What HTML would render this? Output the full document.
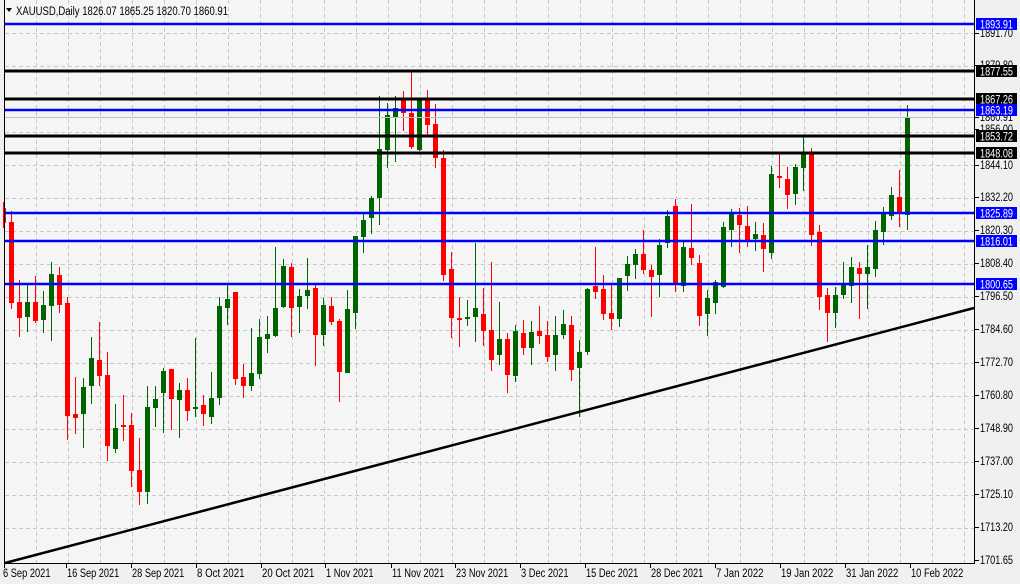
<!DOCTYPE html>
<html><head><meta charset="utf-8"><style>
html,body{margin:0;padding:0;background:#f0f0f0;}
body{width:1020px;height:584px;overflow:hidden;position:relative;font-family:"Liberation Sans",sans-serif;}
svg{position:absolute;left:0;top:0;}
text{font-family:"Liberation Sans",sans-serif;font-size:11.5px;}
</style></head><body>
<svg id="s" width="1020" height="584" xmlns="http://www.w3.org/2000/svg">
<rect x="4" y="0" width="970" height="563" fill="#f5f5f5"/>
<g id="grid" stroke="#c8c8c8" stroke-width="1" stroke-dasharray="4,3"></g>
<g id="candles"></g>
<g id="hl"></g>
<line x1="5" y1="563" x2="974" y2="308" stroke="#000" stroke-width="2.5"/>
<line x1="4.5" y1="0" x2="4.5" y2="563" stroke="#000"/>
<line x1="974.5" y1="0" x2="974.5" y2="563" stroke="#000"/>
<line x1="4" y1="563.5" x2="975" y2="563.5" stroke="#000"/>
<g id="axis" fill="#000"></g>
<g id="dates" fill="#000"></g>
<polygon points="6,8 12,8 9,12" fill="#000"/>
<text x="16" y="15" font-size="12" textLength="212" lengthAdjust="spacingAndGlyphs">XAUUSD,Daily  1826.07 1865.25 1820.70 1860.91</text>
</svg>
<script>
var NS="http://www.w3.org/2000/svg";
function el(p,t,a,txt){var e=document.createElementNS(NS,t);for(var k in a)e.setAttribute(k,a[k]);if(txt!==undefined)e.textContent=txt;document.getElementById(p).appendChild(e);return e;}
for(var y=33;y<560;y+=33){el("grid","line",{x1:5,y1:y+0.5,x2:974,y2:y+0.5});}
for(var x=36;x<974;x+=32){el("grid","line",{x1:x+0.5,y1:0,x2:x+0.5,y2:563});}
var d=[
[-1,'r',202,208,223,228],
[0,'r',211,222,303,309],[1,'r',280,302,318,337],[2,'g',284,302,317,332],[3,'r',276,302,321,323],[4,'g',291,305,320,333],
[5,'g',262,274,306,341],[6,'r',267,275,305,313],[7,'r',297,303,416,440],[8,'r',377,414,418,434],[9,'g',378,387,414,448],
[10,'g',337,358,386,404],[11,'r',322,360,376,386],[12,'r',352,375,446,461],[13,'g',404,428,449,453],[14,'r',395,425,427,441],
[15,'r',413,425,471,487],[16,'r',438,470,492,505],[17,'g',386,407,492,504],[18,'g',386,399,408,427],[19,'g',368,371,393,433],
[20,'r',369,369,399,430],[21,'g',383,390,400,438],[22,'r',378,390,411,421],[23,'g',338,407,409,417],[24,'r',395,405,414,426],
[25,'g',372,398,417,424],[26,'g',297,306,398,405],[27,'g',285,299,308,325],[28,'r',292,292,379,385],[29,'r',364,377,386,398],
[30,'g',328,373,386,391],[31,'g',319,337,374,379],[32,'g',316,334,339,353],[33,'g',247,308,336,337],[34,'g',259,266,307,308],
[35,'r',263,267,308,337],[36,'g',289,296,307,333],[37,'g',258,290,296,309],[38,'r',283,288,335,366],[39,'g',298,305,335,346],
[40,'r',297,306,322,325],[41,'r',319,321,372,402],[42,'g',290,309,373,373],[43,'g',236,236,313,329],[44,'g',214,220,237,253],
[45,'g',196,198,218,234],[46,'g',96,149,198,225],[47,'g',103,115,150,168],[48,'g',96,108,117,162],[49,'r',91,98,113,131],
[50,'r',72,113,147,149],[51,'g',98,100,150,151],[52,'r',90,99,125,135],[53,'r',104,124,158,168],[54,'r',150,158,275,281],
[55,'r',252,269,318,338],[56,'r',297,318,320,347],[57,'g',300,317,319,326],[58,'g',243,308,317,342],[59,'r',288,314,331,346],
[60,'r',262,330,360,371],[61,'g',302,339,355,365],[62,'r',333,339,375,393],[63,'g',325,331,376,382],[64,'r',320,333,348,355],
[65,'g',321,332,348,365],[66,'r',306,331,336,344],[67,'r',321,335,357,362],[68,'g',316,335,355,371],[69,'g',310,324,335,339],
[70,'r',316,325,370,381],[71,'g',340,352,368,417],[72,'g',288,289,352,355],[73,'r',247,286,292,299],[74,'r',275,289,314,320],
[75,'r',285,313,319,330],[76,'g',278,278,319,327],[77,'g',256,264,276,291],[78,'g',249,254,265,279],[79,'r',230,254,270,274],
[80,'r',265,270,277,317],[81,'g',239,245,275,297],[82,'g',210,216,243,248],[83,'r',199,206,283,292],[84,'g',240,247,286,292],
[85,'r',204,248,258,265],[86,'r',255,263,316,326],[87,'g',290,298,314,336],[88,'g',280,282,303,314],[89,'g',222,227,287,288],
[90,'g',209,214,230,247],[91,'r',208,215,225,253],[92,'r',206,226,240,247],[93,'g',222,234,239,251],[94,'r',223,235,249,272],
[95,'g',166,174,253,259],[96,'r',153,176,178,188],[97,'r',167,179,195,209],[98,'g',164,167,194,205],[99,'g',137,154,168,191],
[100,'r',148,154,235,246],[101,'r',225,232,297,310],[102,'r',288,295,313,342],[103,'g',287,295,313,328],[104,'g',262,284,295,299],
[105,'g',257,267,286,303],[106,'r',262,268,274,319],[107,'g',245,267,274,309],[108,'g',221,230,269,277],[109,'g',207,214,232,245],
[110,'g',187,195,216,220],[111,'r',170,197,214,227],[112,'g',105,117,215,230]
];
d.forEach(function(c){var cx=11+8*c[0];var col=c[1]=='g'?'#006400':'#ff0000';
var x0=Math.max(5,cx-2);
el("candles","rect",{x:cx,y:c[2],width:1,height:Math.max(1,c[5]-c[2]),fill:col});
el("candles","rect",{x:x0,y:c[3],width:cx+3-x0,height:Math.max(2,c[4]-c[3]),fill:col});});
var hl=[[24,'#0000ff',2.5,'1893.91'],[71,'#000',3,'1877.55'],[99,'#000',3,'1867.26'],[110,'#0000ff',2.5,'1863.19'],[136,'#000',3,'1853.72'],[153,'#000',3,'1848.08'],[213,'#0000ff',2.5,'1825.89'],[241,'#0000ff',2.5,'1816.01'],[284,'#0000ff',2.5,'1800.65']];
el("hl","line",{x1:5,y1:117.5,x2:974,y2:117.5,stroke:"#c0c0c0","stroke-width":1});
var al=[[33,'1891.70'],[65,'1879.80'],[117,'1860.91'],[129,'1856.00'],[165,'1844.10'],[197,'1832.20'],[230,'1820.30'],[263,'1808.40'],[296,'1796.50'],[329,'1784.60'],[362,'1772.70'],[395,'1760.80'],[428,'1748.90'],[461,'1737.00'],[494,'1725.10'],[527,'1713.20'],[560,'1701.65']];
al.forEach(function(a){el("axis","rect",{x:975,y:a[0],width:4,height:1,fill:"#000"});el("axis","text",{x:980,y:a[0]+4,"font-size":12.5,textLength:33,lengthAdjust:"spacingAndGlyphs"},a[1]);});
hl.forEach(function(h){el("hl","line",{x1:5,y1:h[0],x2:974,y2:h[0],stroke:h[1],"stroke-width":h[2]});
el("axis","rect",{x:976,y:h[0]-6,width:41,height:12,fill:h[1]});
el("axis","text",{x:980,y:h[0]+4.5,fill:"#fff","font-size":12.5,textLength:33,lengthAdjust:"spacingAndGlyphs"},h[3]);});
var dl=[[2,'6 Sep 2021'],[66,'16 Sep 2021'],[131,'28 Sep 2021'],[196,'8 Oct 2021'],[261,'20 Oct 2021'],[325,'1 Nov 2021'],[391,'11 Nov 2021'],[455,'23 Nov 2021'],[520,'3 Dec 2021'],[585,'15 Dec 2021'],[650,'28 Dec 2021'],[715,'7 Jan 2022'],[780,'19 Jan 2022'],[845,'31 Jan 2022'],[910,'10 Feb 2022']];
dl.forEach(function(a){el("dates","rect",{x:a[0]+(a[0]<5?2:0),y:564,width:1,height:4,fill:"#000"});el("dates","text",{x:a[0]+1,y:577,textLength:(a[1].length*4.75).toFixed(1),lengthAdjust:"spacingAndGlyphs"},a[1]);});
</script>
</body></html>
